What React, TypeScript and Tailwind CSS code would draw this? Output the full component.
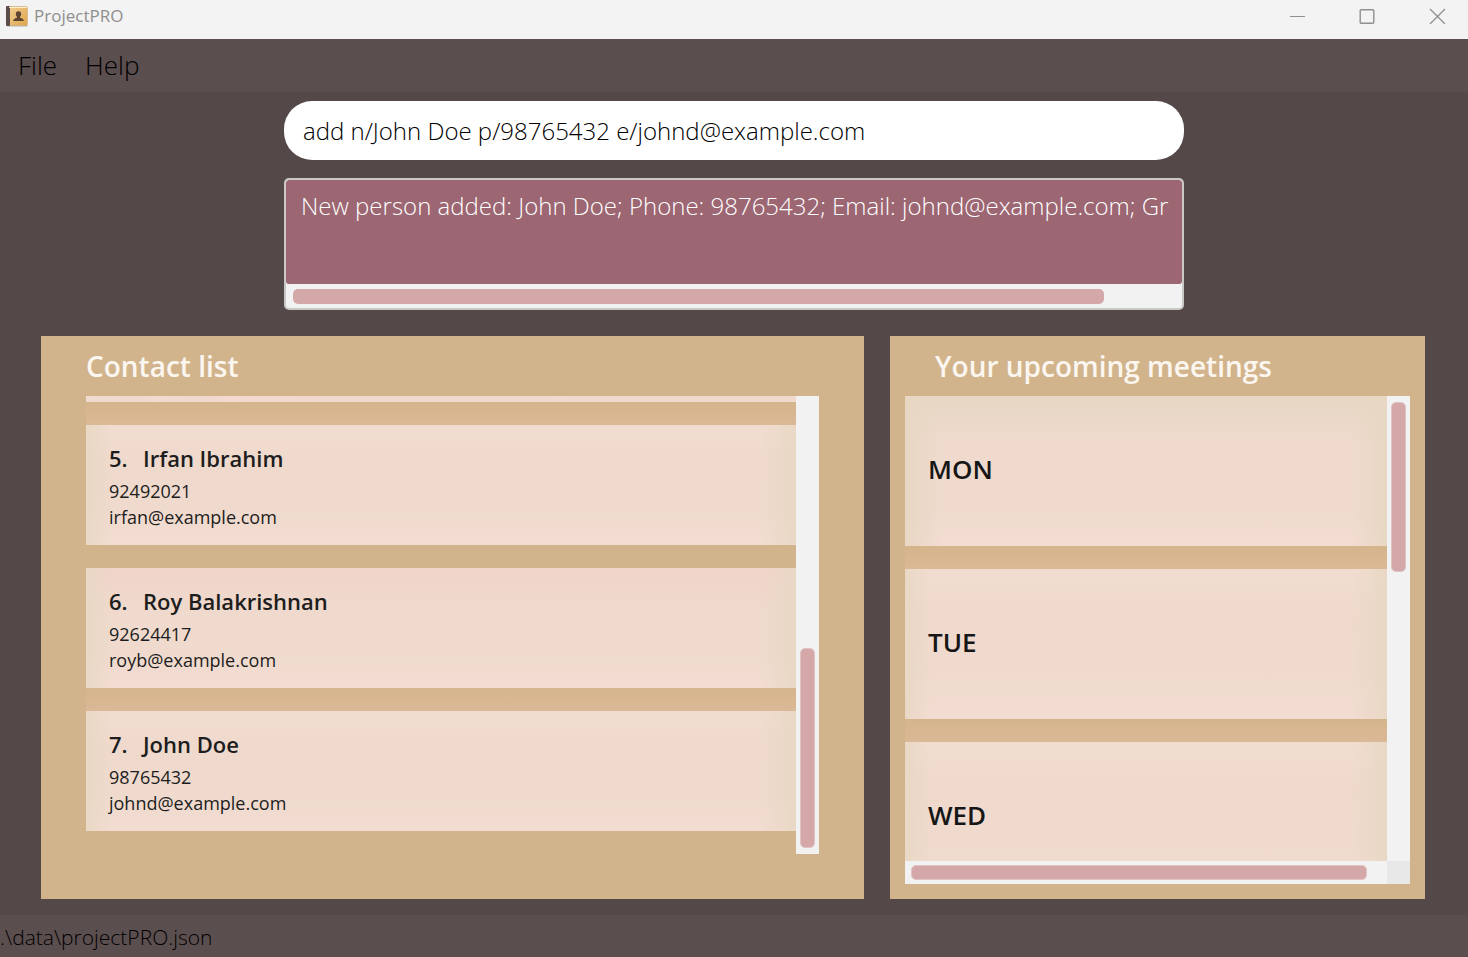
import React from "react";

type Contact = { id: number; name: string; phone: string; email: string; warm: boolean };

const contacts: Contact[] = [
  { id: 5, name: "Irfan Ibrahim", phone: "92492021", email: "irfan@example.com", warm: false },
  { id: 6, name: "Roy Balakrishnan", phone: "92624417", email: "royb@example.com", warm: true },
  { id: 7, name: "John Doe", phone: "98765432", email: "johnd@example.com", warm: false },
];

const days = ["MON", "TUE", "WED"];

const band = "h-[23px] shrink-0 bg-linear-to-b from-[#d4b58b] to-[#dbb897]";
const edges =
  "bg-[linear-gradient(to_right,#e9d8c5,#e9d8c500_26px),linear-gradient(to_left,#e9d8c5,#e9d8c500_36px),linear-gradient(to_bottom,#f1ddd0,#efd9cc_30%,#efdacd_70%,#f3dcd2)]";
const warmEdges =
  "bg-[linear-gradient(to_right,#e9d8c5,#e9d8c500_26px),linear-gradient(to_left,#e9d8c5,#e9d8c500_36px),linear-gradient(to_bottom,#f1d4ca,#efdacd_40%,#efdacd_70%,#f3dcd2)]";
const topEdges =
  "bg-[linear-gradient(to_right,#e8d7c3,#e8d7c300_36px),linear-gradient(to_left,#e8d7c3,#e8d7c300_36px),linear-gradient(to_bottom,#e8d7c4,#efdacd_30%,#efdacd_75%,#f3dcd2)]";

function AppIcon() {
  return (
    <svg width="22" height="21" viewBox="0 0 22 21" aria-hidden="true">
      <defs>
        <linearGradient id="cover" x1="0" y1="0" x2="1" y2="1">
          <stop offset="0" stopColor="#f0cd90" />
          <stop offset="1" stopColor="#dfa64c" />
        </linearGradient>
      </defs>
      <rect x="1" y="19" width="21" height="2" rx="1" fill="#d6d2cc" />
      <rect x="0.5" y="0.5" width="21" height="19" rx="1" fill="#c08a3a" />
      <rect x="0" y="0" width="4" height="20" rx="1" fill="#5b4b49" />
      <rect x="4" y="1" width="17" height="18" fill="url(#cover)" />
      <path d="M3 1.500h18" stroke="#fdf0cf" />
      <path
        d="M12.500 5.200c1.800 0 2.700 1.200 2.700 2.800 0 1.200-.5 2.100-1.200 2.700v1c1.500.4 3.500 1 3.900 3.300H7.100c.4-2.300 2.400-2.900 3.900-3.300v-1c-.7-.6-1.200-1.500-1.200-2.700 0-1.600.9-2.800 2.700-2.800z"
        fill="#5b4432"
      />
    </svg>
  );
}

function VerticalBar({ className, thumb }: { className: string; thumb: string }) {
  return (
    <div className={`flex w-[23px] shrink-0 flex-col bg-[#f2f2f2] px-1 py-1.5 ${className}`}>
      <div className={`rounded-[5px] border border-[#e0c3c3] bg-[#d4a8a8] ${thumb}`} />
    </div>
  );
}

function ContactCard({ contact }: { contact: Contact }) {
  return (
    <li className={`h-[120px] shrink-0 px-[23px] pt-[17px] text-[#1d1d1d] ${contact.warm ? warmEdges : edges}`}>
      <h3 className="mb-1 flex text-[22px] leading-8 font-semibold">
        <span className="w-[34px]">{contact.id}.</span>
        <span>{contact.name}</span>
      </h3>
      <p className="text-[18px] leading-[26px]">{contact.phone}</p>
      <p className="text-[18px] leading-[26px]">{contact.email}</p>
    </li>
  );
}

export default function App() {
  return (
    <div className="flex h-screen flex-col overflow-hidden bg-[#554849] font-['Open_Sans','Noto_Sans',sans-serif]">
      <header className="flex h-[39px] shrink-0 items-start justify-between bg-[#f3f3f3] text-[#8f8f8f]">
        <div className="flex items-center gap-1.5 pt-1 pl-1.5">
          <AppIcon />
          <span className="text-[17px] leading-6">ProjectPRO</span>
        </div>
        <div className="flex gap-2">
          <button aria-label="Minimize" className="flex h-8 w-[62px] items-center justify-center">
            <svg width="16" height="16" viewBox="0 0 16 16" fill="none" stroke="#8f8f8f">
              <path d="M1 8.500h15" />
            </svg>
          </button>
          <button aria-label="Maximize" className="flex h-8 w-[62px] items-center justify-center">
            <svg width="16" height="16" viewBox="0 0 16 16" fill="none" stroke="#8f8f8f" strokeWidth="1.400">
              <rect x="1.200" y="1.700" width="13.600" height="13.600" rx="1" />
            </svg>
          </button>
          <button aria-label="Close" className="flex h-8 w-[62px] items-center justify-center">
            <svg width="16" height="16" viewBox="0 0 16 16" fill="none" stroke="#8f8f8f" strokeWidth="1.300">
              <path d="M1 1l15 15M16 1L1 16" />
            </svg>
          </button>
        </div>
      </header>

      <nav className="flex h-[53px] shrink-0 items-center gap-7 bg-[#5b4e4f] pl-[18px] text-[26px] font-light text-black">
        <button>File</button>
        <button>Help</button>
      </nav>

      <main className="flex min-h-0 flex-1 flex-col pt-[9px] pb-4">
        <div className="mx-auto flex w-full max-w-[900px] flex-col gap-[18px]">
          <input
            aria-label="Command"
            defaultValue="add n/John Doe p/98765432 e/johnd@example.com"
            className="h-[59px] w-full rounded-[28px] bg-white px-[19px] text-[24px] font-light text-black outline-none"
          />
          <div className="flex h-[132px] flex-col overflow-hidden rounded-[5px] border-2 border-[#c8c8c4] bg-[#f2f2f2]">
            <textarea
              aria-label="Result"
              readOnly
              wrap="off"
              value="New person added: John Doe; Phone: 98765432; Email: johnd@example.com; Gr"
              className="block min-h-0 w-full flex-1 resize-none overflow-hidden rounded-[3px] bg-[#9c6672] pt-2 pl-[15px] text-[24px] leading-9 font-light whitespace-pre text-white outline-none"
            />
            <div className="h-6 shrink-0 px-[7px] pt-[5px]">
              <div className="h-[15px] w-[92%] rounded-[5px] bg-[#d4a8a8]" />
            </div>
          </div>
        </div>

        <div className="mt-[26px] grid min-h-0 flex-1 grid-cols-[823fr_535fr] gap-[26px] pr-[43px] pl-[41px]">
          <section className="flex min-h-0 flex-col bg-[#d2b48c] px-[45px] pb-[45px]">
            <h2 className="h-[60px] shrink-0 text-[28px] leading-[60px] font-semibold text-[#fbf6f0]">Contact list</h2>
            <div className="flex min-h-0 flex-1">
              <ul className="flex min-w-0 flex-1 flex-col overflow-hidden">
                <li aria-hidden="true" className="h-1.5 shrink-0 bg-linear-to-r from-[#efdbcf] via-[#f3d9d0] via-20% to-[#efdacd]" />
                <li aria-hidden="true" className={band} />
                <ContactCard contact={contacts[0]} />
                <li aria-hidden="true" className="h-[23px] shrink-0" />
                <ContactCard contact={contacts[1]} />
                <li aria-hidden="true" className={band} />
                <ContactCard contact={contacts[2]} />
              </ul>
              <VerticalBar className="justify-end" thumb="h-[200px]" />
            </div>
          </section>

          <section className="flex min-h-0 flex-col bg-[#d2b48c] px-[15px] pb-[15px]">
            <h2 className="h-[60px] shrink-0 pl-[30px] text-[28px] leading-[60px] font-semibold whitespace-nowrap text-[#fbf6f0]">
              Your upcoming meetings
            </h2>
            <div className="flex min-h-0 flex-1">
              <ul className="flex min-w-0 flex-1 flex-col overflow-hidden">
                {days.map((day, i) => (
                  <React.Fragment key={day}>
                    {i > 0 && <li aria-hidden="true" className={band} />}
                    <li
                      className={`flex h-[150px] shrink-0 items-center px-[23px] pb-1 text-[26px] font-semibold text-[#161616] ${i === 0 ? topEdges : edges}`}
                    >
                      {day}
                    </li>
                  </React.Fragment>
                ))}
              </ul>
              <VerticalBar className="" thumb="h-[170px]" />
            </div>
            <div className="flex h-[23px] shrink-0">
              <div className="flex-1 bg-[#f2f2f2] px-1.5 py-1">
                <div className="h-full w-[97%] rounded-[5px] border border-[#e0c3c3] bg-[#d4a8a8]" />
              </div>
              <div className="w-[23px] bg-[#e8e8e8]" />
            </div>
          </section>
        </div>
      </main>

      <footer className="flex h-[42px] shrink-0 items-center bg-[#5b4e4f] pt-1 text-[21px] font-light text-black">
        .\data\projectPRO.json
      </footer>
    </div>
  );
}
